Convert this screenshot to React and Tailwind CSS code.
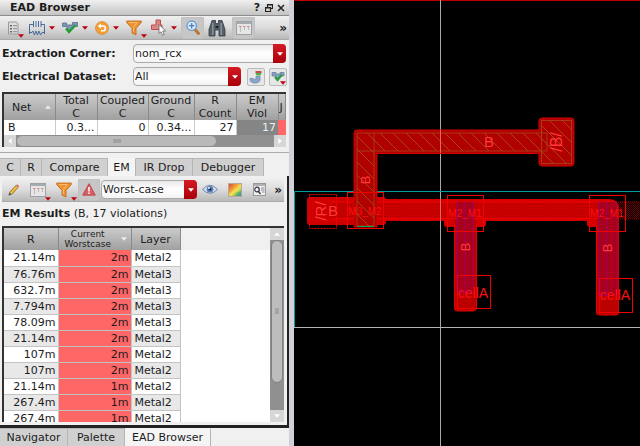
import React from "react";

const bar = "bg-gradient-to-b from-[#f0f0f0] via-[#dcdcdc] to-[#b9b9b9]";
const headCell =
  "border-r border-[#8a8a8a] bg-gradient-to-b from-[#cbcbcb] to-[#a0a0a0] p-0 font-normal text-[#222]";

function Caret({ className = "" }) {
  return (
    <svg viewBox="0 0 6 4" className={"h-1 w-1.5 shrink-0 " + className} aria-hidden="true">
      <path d="M0 0.3h6L3 3.8z" fill="currentColor" />
    </svg>
  );
}

function Tool({ label, menu, corner, pressed, className = "", children }) {
  return (
    <button
      type="button"
      aria-label={label}
      className={
        "relative flex shrink-0 items-center justify-center gap-1 rounded-xs " +
        (pressed ? "bg-[#c6c6c6] shadow-[inset_0_0_1px_#999] " : "") +
        className
      }
    >
      {children}
      {menu && <Caret className="text-[#c00010]" />}
      {corner && <Caret className="absolute right-0 bottom-0 text-[#c00010]" />}
    </button>
  );
}

function Combo({ id, label, options, className = "" }) {
  return (
    <div className={"relative h-[19px] rounded-sm border border-[#aaa] bg-gradient-to-b from-[#e9e9e9] via-white to-[#f3f3f3] " + className}>
      <select id={id} aria-label={label} className="block h-full w-full appearance-none rounded-sm bg-transparent pl-px pr-3 text-[11px] leading-4 outline-none">
        {options.map((o) => (
          <option key={o}>{o}</option>
        ))}
      </select>
      <span className="pointer-events-none absolute -inset-y-px -right-px flex w-[13px] items-center justify-center rounded-r-sm bg-gradient-to-b from-[#d51a24] to-[#a80008]">
        <Caret className="text-white" />
      </span>
    </div>
  );
}

function PageIcon() {
  return (
    <svg viewBox="0 0 12 14" className="h-3.5 w-3" aria-hidden="true">
      <path d="M1.5 1h8l1.5 2v10H1.5z" fill="#ddd" stroke="#999" />
      <path d="M3 4h2v1.500H3zM3 7h2v1.500H3zM3 10h2v1.500H3z" fill="#666" />
      <path d="M6 4.700h4M6 7.700h4M6 10.700h4" stroke="#888" />
    </svg>
  );
}

function CircuitIcon() {
  return (
    <svg viewBox="0 0 16 16" className="size-4" fill="none" stroke="#4a6a9e" aria-hidden="true">
      <path d="M0.500 14V4.500h4M4.500 1v6M7 1v6M9.500 1v6M12 1v6M12 4.500h3.500V14M0.500 12.500h2.500l1-1.500 1.500 4 1.500-4 1.500 4 1.500-4 1.500 4 1.500-2.500h2.500" />
    </svg>
  );
}

function CheckIcon() {
  return (
    <svg viewBox="0 0 16 14" className="h-3.5 w-4" aria-hidden="true">
      <path d="M0.500 2h4v2h6v-2.500h5v4h-4l-3 3H5v-3H0.500z" fill="#7f97b5" stroke="#55708f" strokeWidth="0.800" />
      <path d="M4 7.500l3 3.500L13.500 4" fill="none" stroke="#20a030" strokeWidth="2.400" />
    </svg>
  );
}

function SmallCheckIcon() {
  return (
    <svg viewBox="0 0 14 12" className="h-3 w-3.5" aria-hidden="true">
      <path d="M1 1.500h4v1.500h4v-1.500h4v3.500h-3l-2 2.500H5V5H1z" fill="#8aa0bd" stroke="#6580a0" strokeWidth="0.800" />
      <path d="M4 6l2.500 3L11 3.500" fill="none" stroke="#2c9a40" strokeWidth="2.200" />
    </svg>
  );
}

function UndoIcon() {
  return (
    <svg viewBox="0 0 14 14" className="size-3.5" aria-hidden="true">
      <circle cx="7" cy="7" r="6.500" fill="#f2a03a" stroke="#d98a2a" strokeWidth="0.700" />
      <path d="M4.500 5h3.500a2.300 2.300 0 1 1 0 4.800H6" fill="none" stroke="#fff" strokeWidth="1.500" />
      <path d="M6 2.500v5L2.800 5z" fill="#fff" />
    </svg>
  );
}

function FunnelIcon() {
  return (
    <svg viewBox="0 0 16 16" className="size-4" aria-hidden="true">
      <path d="M0.700 1h14.600v1.500L10 8.500V15l-4-2V8.500L0.700 2.500z" fill="#ef9232" stroke="#b96412" strokeWidth="0.800" />
      <path d="M3 2.500h8L7.500 7.500v4.500" fill="none" stroke="#f9bc74" />
    </svg>
  );
}

function PickIcon() {
  return (
    <svg viewBox="0 0 16 17" className="h-[17px] w-4" aria-hidden="true">
      <path d="M0.500 6h4.500V1h4.500v5h1.500v4.500H0.500z" fill="#dc8585" stroke="#bd4d4d" />
      <path d="M8 5.500v9l2-1.700 1.500 3.500 1.800-0.800-1.600-3.500h3z" fill="#fff" stroke="#666" strokeWidth="0.800" />
    </svg>
  );
}

function MagnifierIcon() {
  return (
    <svg viewBox="0 0 14 15" className="h-[15px] w-3.5" aria-hidden="true">
      <path d="M8.500 9l4 4.500" stroke="#b9752c" strokeWidth="2.800" strokeLinecap="round" />
      <circle cx="5.700" cy="5.700" r="4.700" fill="#d9eafa" stroke="#6e9bcc" strokeWidth="1.400" />
      <path d="M3 5.700h5.400M5.700 3v5.400" stroke="#4c7db8" strokeWidth="1.300" />
    </svg>
  );
}

function BinocularsIcon() {
  return (
    <svg viewBox="0 0 18 18" className="size-[18px]" aria-hidden="true">
      <path d="M4 1.500h3.500v3h3v-3H14l3 9V17h-6v-6H7v6H1v-6.500z" fill="#56606a" stroke="#333b43" strokeWidth="0.800" />
      <path d="M4.800 4v12M13.200 4v12" stroke="#8d98a2" strokeWidth="1.400" />
      <path d="M7.500 8h3" stroke="#222" strokeWidth="2" />
    </svg>
  );
}

function GridIcon() {
  return (
    <svg viewBox="0 0 16 14" className="h-3.5 w-4" aria-hidden="true">
      <rect x="0.500" y="0.500" width="15" height="13" fill="#e6e6e6" stroke="#9da3a8" />
      <path d="M1 2h14" stroke="#a3abb3" strokeWidth="2" />
      <path d="M3 5.500h2.500M7 5.500h2.500M11 5.500h2.500" stroke="#d98a8a" />
      <path d="M4.500 6v5M8.500 6v3M12.500 6v3" stroke="#bbb" />
    </svg>
  );
}

function DbIcon() {
  return (
    <svg viewBox="0 0 14 14" className="size-3.5" aria-hidden="true">
      <path d="M1 8.500h3c0 1.500 3 1 3-0.500V6.500h4v3c0 2.500-2 3.500-5 3.500S1 12 1 8.500z" fill="#8aa6c9" stroke="#6582a8" strokeWidth="0.700" />
      <path d="M6.500 1h6v2h-6z" fill="#cf4a42" />
      <path d="M6.500 3h6l-1 2.500h-4z" fill="#4cae50" />
    </svg>
  );
}

function PencilIcon() {
  return (
    <svg viewBox="0 0 12 12" className="size-3" aria-hidden="true">
      <path d="M2.500 9.500L9 2.500" stroke="#976c20" strokeWidth="3.400" />
      <path d="M2.800 9.200L9 2.500" stroke="#f3c341" strokeWidth="2" />
      <path d="M8.800 2.800l1.500-1.600" stroke="#d87568" strokeWidth="3" />
      <path d="M0.500 11.500l0.700-3 2.200 2.200z" fill="#444" />
    </svg>
  );
}

function WarnIcon() {
  return (
    <svg viewBox="0 0 14 13" className="h-[13px] w-3.5" aria-hidden="true">
      <path d="M7 1l6 11H1z" fill="#db6065" stroke="#c2545a" strokeWidth="1.500" strokeLinejoin="round" />
      <path d="M7 4v4.500M7 9.500v1.500" stroke="#fff" strokeWidth="1.500" />
    </svg>
  );
}

function EyeIcon() {
  return (
    <svg viewBox="0 0 16 11" className="h-[11px] w-4" aria-hidden="true">
      <path d="M0.500 5.500Q8-3 15.500 5.500Q8 13 0.500 5.500z" fill="#d5e0ef" stroke="#7187ab" />
      <circle cx="8" cy="5.300" r="3.300" fill="#577eb8" />
      <circle cx="8" cy="5.300" r="1.400" fill="#1d2c4c" />
      <circle cx="7" cy="4" r="0.900" fill="#fff" />
    </svg>
  );
}

function HeatIcon() {
  return (
    <svg viewBox="0 0 14 14" className="size-3.5" aria-hidden="true">
      <defs>
        <linearGradient id="heat" x1="0" y1="0" x2="1" y2="1">
          <stop offset="0" stopColor="#d4443e" />
          <stop offset="0.350" stopColor="#f09a35" />
          <stop offset="0.550" stopColor="#f3e052" />
          <stop offset="0.750" stopColor="#5fba5f" />
          <stop offset="1" stopColor="#4277c8" />
        </linearGradient>
      </defs>
      <rect x="0.500" y="0.500" width="13" height="13" fill="url(#heat)" stroke="#b9a79a" />
      <path d="M1 10c3 0 4-4 6-4s3 1 6-2v3c-3 3-5 1-7 3s-3 2-5 2z" fill="#f6e35c" opacity="0.500" />
    </svg>
  );
}

function ViewIcon() {
  return (
    <svg viewBox="0 0 13 13" className="size-[13px]" aria-hidden="true">
      <rect x="0.500" y="0.500" width="12" height="12" fill="#f1f1f1" stroke="#999" />
      <path d="M1 2h11" stroke="#b0b0b0" strokeWidth="2" />
      <circle cx="4" cy="6.500" r="2.300" fill="none" stroke="#334" strokeWidth="1.200" />
      <path d="M5.500 8.500l2 2.500" stroke="#334" strokeWidth="1.300" />
      <path d="M8 5h3.500M8 7h3.500M9 9h2.500" stroke="#889" />
    </svg>
  );
}

const netColumns = [
  ["Total", "C"],
  ["Coupled", "C"],
  ["Ground", "C"],
  ["R", "Count"],
  ["EM", "Viol"],
];

function NetTable() {
  return (
    <div className="mt-1.5 mr-[3px] ml-0.5 border-t-2 border-l-2 border-[#333] bg-white">
      <table className="w-full table-fixed border-collapse leading-[13px]">
        <colgroup>
          <col className="w-[51px]" />
          <col className="w-[42px]" />
          <col className="w-[51px]" />
          <col className="w-[46px]" />
          <col className="w-[42px]" />
          <col className="w-[42px]" />
          <col />
        </colgroup>
        <thead>
          <tr className="h-[26px]">
            <th className={headCell}>
              <span className="flex items-center justify-between pr-1 pl-2">
                Net
                <Caret className="rotate-180 text-[#eee]" />
              </span>
            </th>
            {netColumns.map(([a, b]) => (
              <th key={a} className={headCell}>
                {a}
                <br />
                {b}
              </th>
            ))}
            <th className={headCell + " overflow-hidden pl-px text-left"}>J</th>
          </tr>
        </thead>
        <tbody>
          <tr className="h-[15px] text-right">
            <td className="border-r border-[#ccc] p-0 pl-1 text-left">B</td>
            <td className="border-r border-[#ccc] p-0 pr-0.5">0.3...</td>
            <td className="border-r border-[#ccc] p-0 pr-0.5">0</td>
            <td className="border-r border-[#ccc] p-0 pr-0.5">0.34...</td>
            <td className="border-r border-[#ccc] p-0 pr-0.5">27</td>
            <td className="bg-[#858585] p-0 pr-0.5 text-[#e4f2f4]">17</td>
            <td className="bg-[#ff6666] p-0" />
          </tr>
        </tbody>
      </table>
      <div className="flex h-3 bg-[#909090]">
        <span className="flex w-3 items-center justify-center bg-[#d6d6d6]">
          <Caret className="rotate-90 text-white" />
        </span>
        <div className="flex-1">
          <div className="flex h-full w-[78%] items-center justify-center rounded-full border border-[#8c8c8c] bg-[#b9b9b9]">
            <span className="h-1 w-2 bg-[#a2a2a2]" />
          </div>
        </div>
        <span className="flex w-3 items-center justify-center bg-[#d6d6d6]">
          <Caret className="-rotate-90 text-white" />
        </span>
      </div>
    </div>
  );
}

const results = [
  ["21.14m", "2m", "Metal2"],
  ["76.76m", "2m", "Metal3"],
  ["632.7m", "2m", "Metal3"],
  ["7.794m", "2m", "Metal3"],
  ["78.09m", "2m", "Metal3"],
  ["21.14m", "2m", "Metal2"],
  ["107m", "2m", "Metal2"],
  ["107m", "2m", "Metal2"],
  ["21.14m", "1m", "Metal2"],
  ["267.4m", "1m", "Metal2"],
  ["267.4m", "1m", "Metal2"],
];

function ResultsTable() {
  return (
    <div className="mr-[3px] ml-0.5 flex min-h-0 flex-1 basis-0 overflow-hidden border-t-2 border-l-2 border-[#333] bg-white">
      <div className="flex-1 overflow-hidden">
        <table className="w-full table-fixed border-collapse leading-[15px]">
          <colgroup>
            <col className="w-[54px]" />
            <col className="w-[73px]" />
            <col className="w-[49px]" />
            <col />
          </colgroup>
          <thead>
            <tr className="h-[22px]">
              <th className={headCell}>R</th>
              <th className={headCell}>
                <span className="flex items-center justify-between pr-1 pl-1.5 text-[9px] leading-[10px]">
                  <span>
                    Current
                    <br />
                    Worstcase
                  </span>
                  <Caret className="text-[#eee]" />
                </span>
              </th>
              <th className={headCell}>Layer</th>
              <td className="bg-[#f0f0f0] p-0" />
            </tr>
          </thead>
          <tbody>
            {results.map(([r, c, l], i) => (
              <tr key={i} className="group h-4">
                <td className="border-r border-b border-[#c4c4c4] p-0 pr-0.5 text-right group-even:bg-[#e8e8e8]">{r}</td>
                <td className="border-r border-b border-[#c4c4c4] bg-[#ff6666] p-0 pr-0.5 text-right">{c}</td>
                <td className="border-r border-b border-[#c4c4c4] p-0 pl-[3px] group-even:bg-[#e8e8e8]">{l}</td>
                <td className="p-0" />
              </tr>
            ))}
          </tbody>
        </table>
      </div>
      <div className="flex w-3.5 flex-col bg-[#909090]">
        <span className="flex h-3 items-center justify-center bg-[#d6d6d6]">
          <Caret className="rotate-180 text-white" />
        </span>
        <div className="flex-1">
          <div className="mx-px flex h-[84%] items-center justify-center rounded-full border border-[#808080] bg-[#bdbdbd]">
            <span className="h-1.5 w-1 bg-[#a4a4a4]" />
          </div>
        </div>
        <span className="flex h-3 items-center justify-center bg-[#d6d6d6]">
          <Caret className="text-white" />
        </span>
      </div>
    </div>
  );
}

const analysisTabs = [
  ["C", "w-[21px]"],
  ["R", "w-[21px]"],
  ["Compare", "w-[66px]"],
  ["EM", "w-[28px]"],
  ["IR Drop", "w-[57px]"],
  ["Debugger", "w-[71px]"],
];

const dockTabs = [
  ["Navigator", "w-[68px]"],
  ["Palette", "w-[57px]"],
  ["EAD Browser", "w-[86px]"],
];

function Tabs({ tabs, active, className }) {
  return (
    <div role="tablist" className="flex">
      {tabs.map(([t, w]) => (
        <button
          key={t}
          type="button"
          role="tab"
          aria-selected={t === active}
          className={
            "shrink-0 border-t border-r border-r-[#b5b5b5] text-center whitespace-nowrap " +
            w + " " + className + " " +
            (t === active ? "border-t-[#f4f4f4] bg-[#f4f4f4]" : "border-t-[#b5b5b5] bg-[#d0d0d0]")
          }
        >
          {t}
        </button>
      ))}
    </div>
  );
}

function Layout() {
  return (
    <svg
      viewBox="294 0 346 446"
      preserveAspectRatio="xMinYMin slice"
      className="h-full w-full font-['Liberation_Sans',Arial,sans-serif]"
      role="img"
      aria-label="Layout of net B"
    >
      <defs>
        <pattern id="diag" width="13" height="13" patternUnits="userSpaceOnUse">
          <path d="M-1 -1L14 14" stroke="#a8481c" strokeWidth="0.900" />
        </pattern>
        <pattern id="dots" width="3" height="3" patternUnits="userSpaceOnUse">
          <path d="M0 0h1v1H0zM1.500 1.500h1v1h-1z" fill="#8c0000" />
        </pattern>
        <pattern id="mesh" width="2" height="2" patternUnits="userSpaceOnUse">
          <path d="M0 0h1v1H0zM1 1h1v1H1z" fill="#a80000" />
        </pattern>
      </defs>
      <rect x="294" width="346" height="446" fill="#000" />
      <path d="M294 0.500h346" stroke="#c00000" />
      <path d="M440.500 0V446" stroke="#aaa" />
      <path d="M294 327.500H640" stroke="#b4b4b4" />
      <path d="M640 191.500H294.500V327" fill="none" stroke="#00a0a0" />

      <rect x="616" y="202" width="24" height="17" fill="url(#mesh)" opacity="0.600" />
      <path d="M616 202h24M616 219h24" stroke="#b00000" strokeDasharray="1 1" />

      <rect x="307" y="197" width="79" height="28" rx="3" fill="#cc0000" />
      <path d="M384 199H609q10 0 10 10V224q0 3-3 3H590q-3 0-3-3V221H486V224q0 3-3 3H447q-3 0-3-3V221H384z" fill="#d40000" />
      <rect x="332" y="202" width="285" height="16" fill="url(#dots)" opacity="0.800" />
      <path d="M332 202H617M332 218.500H617" stroke="#f40000" />

      <rect x="454" y="219" width="22" height="92" rx="3" fill="#bb0000" />
      <rect x="596" y="219" width="23" height="96" rx="3" fill="#bb0000" />
      <rect x="456" y="202" width="17" height="91" fill="#ab0020" />
      <rect x="598" y="202" width="18" height="93" fill="#ab0020" />
      <rect x="456" y="202" width="17" height="91" fill="url(#dots)" opacity="0.400" />
      <rect x="598" y="202" width="18" height="93" fill="url(#dots)" opacity="0.400" />
      <path d="M456.500 202V292.500H473.500V202M465.500 202V292M598.500 202V295.500H616.500V202M606.500 202V295" fill="none" stroke="#a0005c" />
      <path d="M454.500 222V308q0 3 3 3h16q3 0 3-3V222M596.500 222V312q0 3 3 3h16q3 0 3-3V222" fill="none" stroke="#e00000" />

      <path d="M357 130H539V121q0-3 3-3H571q3 0 3 3V163q0 3-3 3H542q-3 0-3-3V153.500H377V227H354V133q0-3 3-3z" fill="#b00000" stroke="#d30000" />
      <path d="M357 133H547V151H374V226H357z" fill="url(#diag)" stroke="#a8481c" strokeWidth="0.800" />
      <rect x="541.500" y="120.500" width="30" height="43" fill="url(#diag)" stroke="#a8481c" strokeWidth="0.800" />
      <path d="M357 151H374M374 133V151" stroke="#a8481c" strokeWidth="0.800" />
      <path d="M357 226.500H374" stroke="#00a850" />
      <path d="M440.500 130V153M440.500 199V221" stroke="#d96a6a" />

      <g fill="none" stroke="#f00000">
        <rect x="309.500" y="194.500" width="27" height="34" strokeDasharray="2 1" />
        <rect x="312.500" y="201.500" width="24" height="19" strokeDasharray="1 1" />
        <rect x="347.500" y="192.500" width="36" height="36" />
        <rect x="447.500" y="195.500" width="36" height="36" />
        <rect x="589.500" y="195.500" width="36" height="36" />
        <rect x="457.500" y="275.500" width="33" height="33" />
        <rect x="599.500" y="278.500" width="33" height="34" />
      </g>

      <path d="M317 197l10 7M317 224l13-7M549 155l15-9M549 136l15-9" stroke="none" />
      <g fill="#ff3838" textAnchor="middle">
        <text x="489" y="147" fontSize="15">B</text>
        <text transform="translate(562 142) rotate(-90)" fontSize="16">/B/</text>
        <text transform="translate(370 180) rotate(-90)" fontSize="13">B</text>
        <text transform="translate(326 211) rotate(-90)" fontSize="15">/R/</text>
        <text x="333" y="216" fontSize="15">B</text>
        <text transform="translate(470 247) rotate(-90)" fontSize="13">B</text>
        <text transform="translate(612 248) rotate(-90)" fontSize="13">B</text>
      </g>
      <g fill="#ff1010" textAnchor="middle">
        <text x="365" y="215" fontSize="10">M3_M2</text>
        <text x="465" y="217" fontSize="10">M2_M1</text>
        <text x="607" y="217" fontSize="10">M2_M1</text>
        <text x="473" y="298" fontSize="14">cellA</text>
        <text x="615" y="300" fontSize="14">cellA</text>
      </g>
    </svg>
  );
}

export default function App() {
  return (
    <div className="flex h-screen overflow-hidden bg-black font-['DejaVu_Sans',Verdana,sans-serif] text-[11px] leading-[14px] text-[#1c1c1c]">
      <aside className="flex w-[294px] shrink-0 flex-col border-r-[5px] border-[#cfd0d8] bg-[#f0f0f0]">
        <header className="flex h-4 shrink-0 items-center border-b border-[#8c8c8c] bg-gradient-to-b from-[#f0f0f0] to-[#c4c4c4] pr-1 pl-2.5">
          <h1 className="flex-1 font-bold">EAD Browser</h1>
          <div className="flex items-center gap-1">
            <button type="button" aria-label="Help" className="flex size-2 items-center justify-center font-bold">?</button>
            <button type="button" aria-label="Float" className="flex size-2 items-center">
              <svg viewBox="0 0 8 8" className="size-2" fill="none" stroke="#222" aria-hidden="true">
                <path d="M2.500 3V0.500h5v4H6M2.500 1h5M0.500 3.500h5v4h-5zM0.500 4h5" strokeWidth="1.200" />
              </svg>
            </button>
            <button type="button" aria-label="Close" className="flex size-2 items-center">
              <svg viewBox="0 0 8 8" className="size-2" stroke="#222" strokeWidth="1.500" aria-hidden="true">
                <path d="M1 1l6 6M7 1L1 7" />
              </svg>
            </button>
          </div>
        </header>

        <div className={"flex h-6 shrink-0 items-center border-b border-[#aaa] pr-0.5 pl-[5px] " + bar}>
          <Tool label="Report" corner className="h-5 w-[19px] pr-1"><PageIcon /></Tool>
          <Tool label="Extraction" menu className="ml-1 h-5 w-7"><CircuitIcon /></Tool>
          <Tool label="Check" menu className="ml-1 h-5 w-[29px]"><CheckIcon /></Tool>
          <Tool label="Reload" menu className="ml-1 h-5 w-7"><UndoIcon /></Tool>
          <Tool label="Filter" corner className="ml-1 h-5 w-[22px] pr-1"><FunnelIcon /></Tool>
          <Tool label="Select shape" menu className="ml-0.5 h-5 w-[30px]"><PickIcon /></Tool>
          <Tool label="Zoom to net" pressed className="ml-0.5 h-[22px] w-[23px]"><MagnifierIcon /></Tool>
          <Tool label="Find" className="ml-0.5 h-5 w-[22px]"><BinocularsIcon /></Tool>
          <Tool label="Columns" pressed className="ml-1 h-[22px] w-[23px]"><GridIcon /></Tool>
          <button type="button" aria-label="More tools" className="ml-auto text-xs leading-4 font-bold">»</button>
        </div>

        <div className="mt-1 flex shrink-0 items-center pr-[3px] pl-0.5">
          <label htmlFor="corner" className="w-[131px] font-bold">Extraction Corner:</label>
          <Combo id="corner" options={["nom_rcx"]} className="flex-1" />
        </div>
        <div className="mt-1 flex shrink-0 items-center pr-0.5 pl-0.5">
          <label htmlFor="dataset" className="w-[131px] font-bold">Electrical Dataset:</label>
          <Combo id="dataset" options={["All"]} className="flex-1" />
          <Tool label="Load dataset" className="ml-1.5 size-[18px] border border-[#bbb] bg-[#e6e6e6]"><DbIcon /></Tool>
          <Tool label="Verify dataset" corner className="ml-1 size-[18px] border border-[#bbb] bg-[#e6e6e6]"><SmallCheckIcon /></Tool>
        </div>

        <NetTable />

        <div className="mt-[5px] mb-1 h-0.5 shrink-0 border-t border-[#aaa]" />
        <Tabs tabs={analysisTabs} active="EM" className="h-[18px]" />

        <section className="flex min-h-0 flex-1 flex-col border-r-2 border-b-[3px] border-[#222] pb-[3px]">
          <div className={"mr-[3px] ml-0.5 mt-0.5 flex h-6 shrink-0 items-center border-b border-[#aaa] pr-0.5 pl-1 " + bar}>
            <Tool label="Edit" className="h-5 w-[15px]"><PencilIcon /></Tool>
            <Tool label="Table view" corner className="ml-2 h-[22px] w-[22px] pr-1"><GridIcon /></Tool>
            <Tool label="Filter results" corner className="ml-1 h-[22px] w-[22px] pr-1"><FunnelIcon /></Tool>
            <Tool label="Show violations" pressed className="ml-px h-[22px] w-[22px]"><WarnIcon /></Tool>
            <Combo label="Result mode" options={["Worst-case"]} className="ml-px w-[96px]" />
            <Tool label="Visibility" className="ml-1 h-5 w-[18px]"><EyeIcon /></Tool>
            <Tool label="Heat map" className="ml-2 h-5 w-4"><HeatIcon /></Tool>
            <Tool label="Inspect" className="ml-2 h-5 w-4"><ViewIcon /></Tool>
            <button type="button" aria-label="More result tools" className="ml-auto text-xs leading-4 font-bold">»</button>
          </div>
          <p className="shrink-0 py-[5px] pl-0.5">
            <b>EM Results</b> (B, 17 violations)
          </p>
          <ResultsTable />
        </section>

        <Tabs tabs={dockTabs} active="EAD Browser" className="h-[18px]" />
      </aside>

      <main className="min-w-0 flex-1">
        <Layout />
      </main>
    </div>
  );
}
